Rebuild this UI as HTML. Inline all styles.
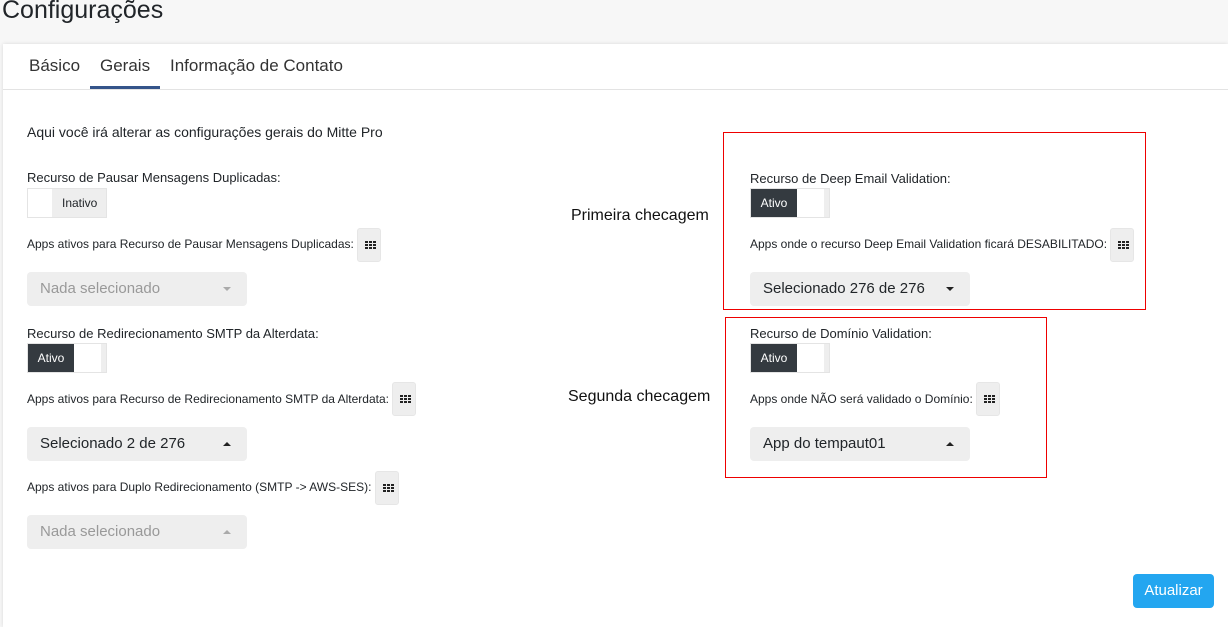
<!DOCTYPE html>
<html><head><meta charset="utf-8"><style>
*{margin:0;padding:0;box-sizing:border-box}
body{width:1228px;height:627px;background:#f7f7f7;font-family:"Liberation Sans",sans-serif;color:#212529;position:relative;overflow:hidden}
.a{position:absolute;white-space:nowrap}
.card{position:absolute;left:3px;top:44px;width:1225px;height:583px;background:#fff;box-shadow:0 0 4px rgba(0,0,0,.12)}
.lbl{font-size:13px;color:#212529}
.sm{font-size:12px}
.tg{position:absolute;height:30px;background:#eee;border:1px solid #e4e4e4;font-size:12px}
.tg .on{position:absolute;left:0;top:0;width:46px;height:28px;background:#343a40;color:#fff;line-height:28px;text-align:center}
.tg .w{position:absolute;top:0;height:28px;background:#fff}
.gb{position:absolute;width:24px;height:34px;background:#eee;border-radius:3px;border:1px solid #e6e6e6}
.gb svg{position:absolute;left:7px;top:12px}
.sel{position:absolute;width:220px;height:34px;background:#eee;border-radius:4px;font-size:15px;line-height:34px;padding-left:13px;color:#212529}
.sel.d{color:#999}
.car{position:absolute;right:16px;top:15px;width:0;height:0;border-left:4px solid transparent;border-right:4px solid transparent;border-top:4px solid #222}
.car.up{border-top:0;border-bottom:4px solid #222}
.d .car{border-top-color:#aaa;border-bottom-color:#aaa}
.box{position:absolute;border:1px solid #e00}
</style></head><body>
<svg width="0" height="0" style="position:absolute"><defs><g id="g"><rect x="0" y="0" width="3" height="2" fill="#222"/><rect x="4" y="0" width="3" height="2" fill="#222"/><rect x="8" y="0" width="3" height="2" fill="#222"/><rect x="0" y="3" width="3" height="2" fill="#222"/><rect x="4" y="3" width="3" height="2" fill="#222"/><rect x="8" y="3" width="3" height="2" fill="#222"/><rect x="0" y="6" width="3" height="2" fill="#222"/><rect x="4" y="6" width="3" height="2" fill="#222"/><rect x="8" y="6" width="3" height="2" fill="#222"/></g></defs></svg>
<div class="a" style="left:2px;top:-4px;font-size:25px;color:#212529">Configurações</div>
<div class="card"></div>
<div class="a" style="left:29px;top:56px;font-size:17px;color:#333">Básico</div>
<div class="a" style="left:100px;top:56px;font-size:17px;color:#333">Gerais</div>
<div class="a" style="left:170px;top:56px;font-size:17px;color:#333">Informação de Contato</div>
<div class="a" style="left:3px;top:89px;width:1225px;height:1px;background:#e3e3e3"></div>
<div class="a" style="left:90px;top:86px;width:70px;height:3px;background:#34548a"></div>

<div class="a lbl" style="left:27px;top:124px;font-size:14px">Aqui você irá alterar as configurações gerais do Mitte Pro</div>

<div class="a lbl" style="left:27px;top:170px">Recurso de Pausar Mensagens Duplicadas:</div>
<div class="tg" style="left:27px;top:188px;width:80px"><div class="w" style="left:0;width:24px"></div><div class="a" style="left:34px;top:7px">Inativo</div></div>
<div class="a sm" style="left:27px;top:237px">Apps ativos para Recurso de Pausar Mensagens Duplicadas:</div>
<div class="gb" style="left:357px;top:228px"><svg width="11" height="8"><use href="#g"/></svg></div>
<div class="sel d" style="left:27px;top:272px">Nada selecionado<span class="car"></span></div>

<div class="a lbl" style="left:27px;top:326px">Recurso de Redirecionamento SMTP da Alterdata:</div>
<div class="tg" style="left:27px;top:343px;width:80px"><div class="on">Ativo</div><div class="w" style="left:46px;width:27px"></div></div>
<div class="a sm" style="left:27px;top:392px">Apps ativos para Recurso de Redirecionamento SMTP da Alterdata:</div>
<div class="gb" style="left:392px;top:382px"><svg width="11" height="8"><use href="#g"/></svg></div>
<div class="sel" style="left:27px;top:427px">Selecionado 2 de 276<span class="car up"></span></div>

<div class="a sm" style="left:27px;top:480px">Apps ativos para Duplo Redirecionamento (SMTP -&gt; AWS-SES):</div>
<div class="gb" style="left:375px;top:471px"><svg width="11" height="8"><use href="#g"/></svg></div>
<div class="sel d" style="left:27px;top:515px">Nada selecionado<span class="car up"></span></div>

<div class="a" style="left:571px;top:207px;font-size:16px;color:#111">Primeira checagem</div>
<div class="a" style="left:568px;top:388px;font-size:16px;color:#111">Segunda checagem</div>

<div class="box" style="left:723px;top:132px;width:423px;height:178px"></div>
<div class="a lbl" style="left:750px;top:171px">Recurso de Deep Email Validation:</div>
<div class="tg" style="left:750px;top:188px;width:80px"><div class="on">Ativo</div><div class="w" style="left:46px;width:27px"></div></div>
<div class="a sm" style="left:750px;top:237px">Apps onde o recurso Deep Email Validation ficará DESABILITADO:</div>
<div class="gb" style="left:1110px;top:228px"><svg width="11" height="8"><use href="#g"/></svg></div>
<div class="sel" style="left:750px;top:272px">Selecionado 276 de 276<span class="car"></span></div>

<div class="box" style="left:725px;top:317px;width:322px;height:161px"></div>
<div class="a lbl" style="left:750px;top:326px">Recurso de Domínio Validation:</div>
<div class="tg" style="left:750px;top:343px;width:80px"><div class="on">Ativo</div><div class="w" style="left:46px;width:27px"></div></div>
<div class="a sm" style="left:750px;top:392px">Apps onde NÃO será validado o Domínio:</div>
<div class="gb" style="left:976px;top:382px"><svg width="11" height="8"><use href="#g"/></svg></div>
<div class="sel" style="left:750px;top:427px">App do tempaut01<span class="car up"></span></div>

<div class="a" style="left:1133px;top:574px;width:81px;height:34px;background:#23a6f0;border-radius:4px;color:#fff;font-size:15px;line-height:34px;text-align:center">Atualizar</div>
</body></html>
